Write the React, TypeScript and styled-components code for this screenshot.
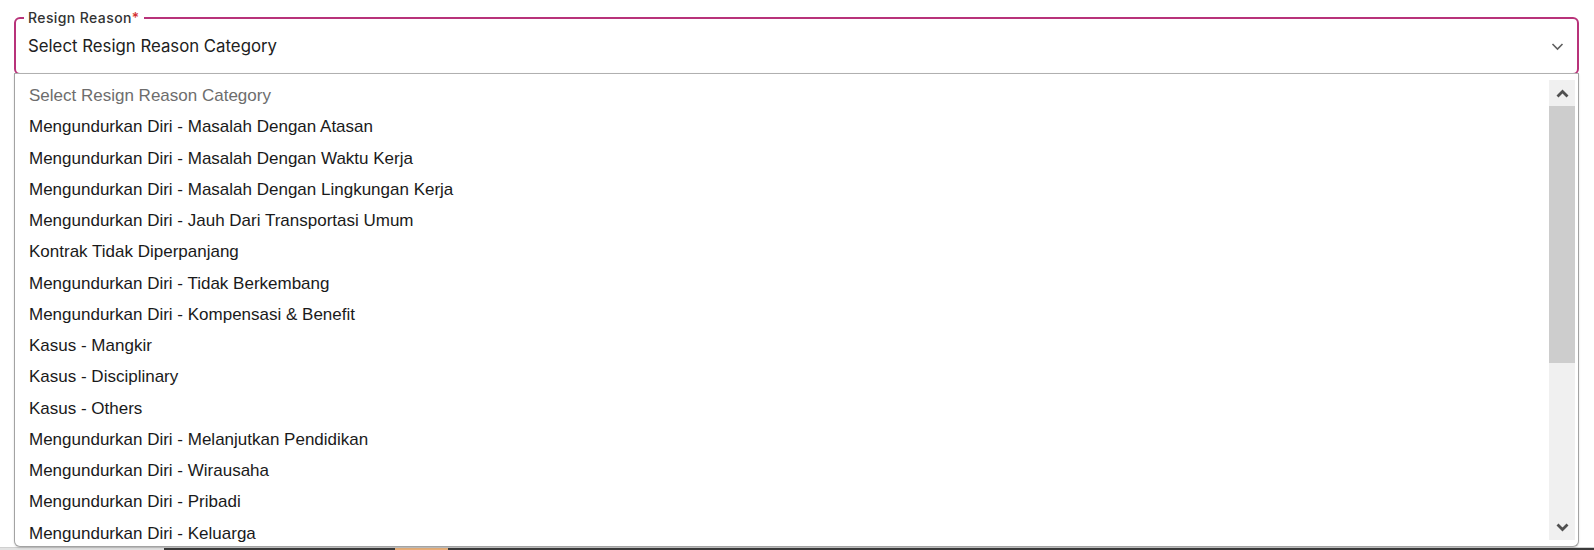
import React from "react";
import styled, { createGlobalStyle } from "styled-components";

const GlobalStyle = createGlobalStyle`
  html, body { margin: 0; padding: 0; background: #ffffff; }
  body { font-family: "Liberation Sans", Arial, sans-serif; }
  * { box-sizing: border-box; }
`;

const Page = styled.div`
  width: 1594px;
  height: 550px;
  display: flex;
  flex-direction: column;
  overflow: hidden;
  background: #fff;
`;

const FieldArea = styled.div`
  padding: 10px 15px 0 14px;
  display: flex;
  flex-direction: column;
`;

const Fieldset = styled.fieldset`
  margin: 0;
  padding: 0 13px 7px 8px;
  border: 2px solid #b8337a;
  border-radius: 6px;
  min-width: 0;
`;

const Legend = styled.legend`
  padding: 0 4px;
  font-family: Inter, "Liberation Sans", sans-serif;
  font-size: 14px;
  font-weight: 500;
  letter-spacing: 0.4px;
  line-height: 15px;
  color: #333333;
`;

const Required = styled.span`
  color: #d32f2f;
`;

const ValueRow = styled.div`
  height: 41px;
  display: flex;
  align-items: center;
  justify-content: space-between;
  padding-left: 4px;
  font-family: Inter, "Liberation Sans", sans-serif;
  font-size: 16.8px;
  color: #212121;
`;

const Chevron = styled.svg`
  width: 13px;
  height: 9px;
  margin-top: 1px;
`;

const ListBox = styled.div`
  position: relative;
  margin: -2px 15px 0 14px;
  height: 474px;
  border: 1px solid #a3a3a3;
  border-top-color: #b0b0b0;
  border-radius: 0 0 6px 6px;
  box-shadow: 0 1px 2px rgba(0, 0, 0, 0.15);
  display: flex;
  overflow: hidden;
  background: #fff;
`;

const Items = styled.ul`
  list-style: none;
  margin: 0;
  padding: 6px 0 0 0;
  flex: 1;
  overflow: hidden;
`;

const Item = styled.li<{ $placeholder?: boolean }>`
  height: 31.25px;
  line-height: 31.25px;
  padding-left: 14px;
  font-family: "Liberation Sans", Arial, sans-serif;
  font-size: 17px;
  color: ${(p) => (p.$placeholder ? "#6d6d6d" : "#1a1a1a")};
  white-space: nowrap;
`;

const Scrollbar = styled.div`
  width: 26px;
  margin: 6px 3px 6px 0;
  background: #f0f0f0;
  display: flex;
  flex-direction: column;
`;

const ScrollButton = styled.div`
  height: 26px;
  display: flex;
  align-items: center;
  justify-content: center;
  flex-shrink: 0;
`;

const Track = styled.div`
  flex: 1;
  display: flex;
  flex-direction: column;
`;

const Thumb = styled.div`
  background: #cdcdcd;
  flex-shrink: 0;
`;

const BottomStrip = styled.div`
  flex: 1;
  display: flex;
  border-top: 1px solid #d0d0d0;
`;

const StripSegment = styled.div<{ $color: string }>`
  background: ${(p) => p.$color};
`;

const options = [
  "Mengundurkan Diri - Masalah Dengan Atasan",
  "Mengundurkan Diri - Masalah Dengan Waktu Kerja",
  "Mengundurkan Diri - Masalah Dengan Lingkungan Kerja",
  "Mengundurkan Diri - Jauh Dari Transportasi Umum",
  "Kontrak Tidak Diperpanjang",
  "Mengundurkan Diri - Tidak Berkembang",
  "Mengundurkan Diri - Kompensasi & Benefit",
  "Kasus - Mangkir",
  "Kasus - Disciplinary",
  "Kasus - Others",
  "Mengundurkan Diri - Melanjutkan Pendidikan",
  "Mengundurkan Diri - Wirausaha",
  "Mengundurkan Diri - Pribadi",
  "Mengundurkan Diri - Keluarga",
];

const ArrowUp = () => (
  <svg width="13" height="9" viewBox="0 0 13 9">
    <path d="M1.5 7.5 L6.5 2.5 L11.5 7.5" fill="none" stroke="#505050" strokeWidth="2.8" />
  </svg>
);

const ArrowDown = () => (
  <svg width="13" height="9" viewBox="0 0 13 9">
    <path d="M1.5 1.5 L6.5 6.5 L11.5 1.5" fill="none" stroke="#505050" strokeWidth="2.8" />
  </svg>
);

export default function App() {
  return (
    <Page>
      <GlobalStyle />
      <FieldArea>
        <Fieldset>
          <Legend>
            Resign Reason<Required>*</Required>
          </Legend>
          <ValueRow>
            <span>Select Resign Reason Category</span>
            <Chevron viewBox="0 0 13 9">
              <path d="M1.5 2 L6.5 7 L11.5 2" fill="none" stroke="#5f5f5f" strokeWidth="1.6" />
            </Chevron>
          </ValueRow>
        </Fieldset>
      </FieldArea>
      <ListBox>
        <Items>
          <Item $placeholder>Select Resign Reason Category</Item>
          {options.map((o) => (
            <Item key={o}>{o}</Item>
          ))}
        </Items>
        <Scrollbar>
          <ScrollButton>
            <ArrowUp />
          </ScrollButton>
          <Track>
            <Thumb style={{ height: 257 }} />
          </Track>
          <ScrollButton>
            <ArrowDown />
          </ScrollButton>
        </Scrollbar>
      </ListBox>
      <BottomStrip>
        <StripSegment $color="#e2e2e2" style={{ width: 164 }} />
        <StripSegment $color="#3a3a3a" style={{ width: 231 }} />
        <StripSegment $color="#e9b07a" style={{ width: 53 }} />
        <StripSegment $color="#3a3a3a" style={{ flex: 1 }} />
      </BottomStrip>
    </Page>
  );
}
